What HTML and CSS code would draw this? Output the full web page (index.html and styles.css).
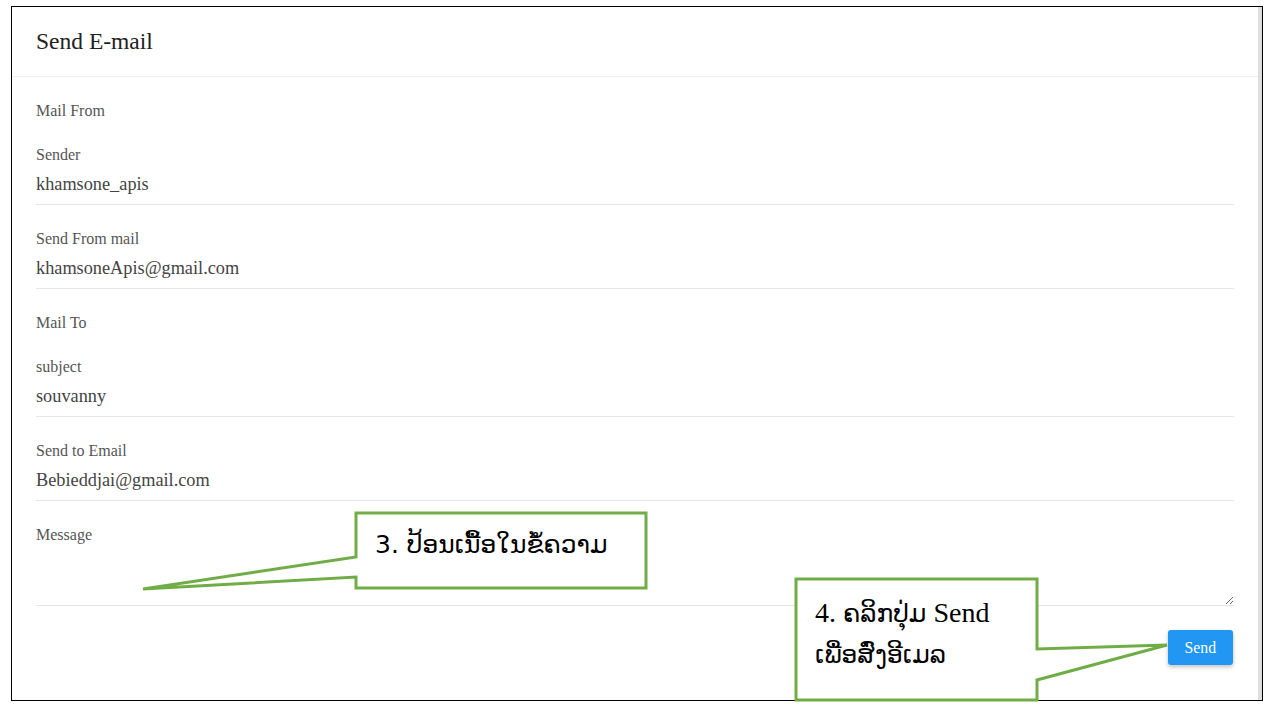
FILE: index.html
```html
<!DOCTYPE html>
<html lang="en">
<head>
    <meta charset="UTF-8">
    <title>Send E-mail</title>
    <link rel="stylesheet" href="styles.css">
</head>
<body>
    <div class="frame">
        <div class="card">
            <div class="card-header">
                <h1>Send E-mail</h1>
            </div>

            <form class="card-body">
                <!-- Mail From -->
                <div class="section-title">Mail From</div>
                <div class="field">
                    <label for="sender">Sender</label>
                    <input type="text" id="sender" value="khamsone_apis">
                </div>
                <div class="field">
                    <label for="from-mail">Send From mail</label>
                    <input type="text" id="from-mail" value="khamsoneApis@gmail.com">
                </div>

                <!-- Mail To -->
                <div class="section-title">Mail To</div>
                <div class="field">
                    <label for="subject">subject</label>
                    <input type="text" id="subject" value="souvanny">
                </div>
                <div class="field">
                    <label for="to-mail">Send to Email</label>
                    <input type="text" id="to-mail" value="Bebieddjai@gmail.com">
                </div>
                <div class="field field-message">
                    <label for="message">Message</label>
                    <textarea id="message"></textarea>
                </div>

                <div class="actions">
                    <button type="button">Send</button>
                </div>
            </form>
        </div>
    </div>

    <!-- Callouts -->
    <svg class="callouts" width="1273" height="711" viewBox="0 0 1273 711">
        <polygon points="356,513 646,513 646,588 356,588 356,577 143,589 356,557" />
        <polygon points="796,579 1037,579 1037,649 1167,645 1037,680 1037,700 796,700" />
    </svg>
    <div class="note note-message">3. ປ້ອນເນື້ອໃນຂໍ້ຄວາມ</div>
    <div class="note note-send">
        <div>4. <span class="lao">ຄລິກປຸ່ມ</span> Send</div>
        <div class="lao">ເພື່ອສົ່ງອີເມລ</div>
    </div>
</body>
</html>
```

FILE: styles.css
```css
/* Base */
html, body {
    margin: 0;
    padding: 0;
    background: #fff;
    font-family: "Liberation Serif", "Times New Roman", serif;
}
* {
    box-sizing: border-box;
}
body {
    position: relative;
    width: 1273px;
    height: 711px;
    overflow: hidden;
}

/* Frame */
.frame {
    margin: 6px 0 0 11px;
    width: 1252px;
    height: 695px;
    border: 1px solid #000;
    display: flex;
}

.card {
    flex: 1;
    border-right: 4px solid #dedede;
    background: #fff;
}

.card-header {
    height: 70px;
    padding: 0 24px;
    display: flex;
    align-items: center;
    border-bottom: 1px solid #eee;
}

.card-header h1 {
    margin: 0;
    font-size: 23.5px;
    font-weight: normal;
    color: #222;
}

/* Form */
.card-body {
    padding: 23px 24px 0;
}

.section-title,
.field label {
    display: block;
    padding-top: 1px;
    font-size: 16px;
    line-height: 20px;
    color: #555;
}

.section-title {
    margin-bottom: 23px;
}

.field {
    margin-bottom: 23px;
}

.field input,
.field textarea {
    display: block;
    width: 100%;
    height: 40px;
    padding: 0;
    border: none;
    border-bottom: 1px solid #e6e6e6;
    background: transparent;
    font-family: inherit;
    font-size: 18.3px;
    color: #444;
    outline: none;
}

.field textarea {
    height: 61px;
    resize: vertical;
}

.field-message {
    margin-bottom: 24px;
}

.actions {
    display: flex;
    justify-content: flex-end;
}

.actions button {
    height: 35px;
    margin-right: 1px;
    padding: 0 17px;
    border: none;
    border-radius: 3px;
    background: #2196f3;
    color: #fff;
    font-family: inherit;
    font-size: 15.75px;
    box-shadow: 0 2px 4px rgba(0, 0, 0, 0.25);
    cursor: pointer;
}

/* Callouts */
.callouts {
    position: absolute;
    top: 0;
    left: 0;
    pointer-events: none;
}

.callouts polygon {
    fill: #fff;
    stroke: #70ad47;
    stroke-width: 3;
}

.note {
    position: absolute;
    color: #000;
    white-space: nowrap;
}

.note-message {
    left: 375px;
    top: 529px;
    font-family: "DejaVu Sans", sans-serif;
    font-size: 25px;
    line-height: 32px;
}

.note-send {
    left: 815px;
    top: 592px;
    font-size: 28px;
    line-height: 41px;
}

.note-send .lao {
    font-family: "DejaVu Sans", sans-serif;
    font-size: 25px;
}
```
